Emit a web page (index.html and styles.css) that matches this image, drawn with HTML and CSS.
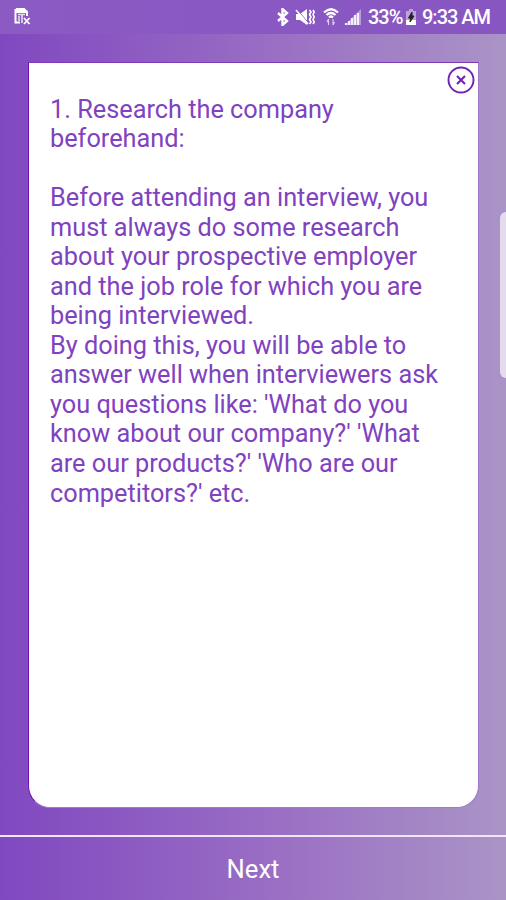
FILE: index.html
```
<!DOCTYPE html>
<html lang="en">
<head>
  <meta charset="UTF-8" />
  <meta name="viewport" content="width=device-width, initial-scale=1.0" />
  <title>Interview Tips</title>
  <link rel="stylesheet" href="styles.css">
</head>
<body>
  <header class="status-bar">
    <svg class="icon-app" width="18" height="20" viewBox="0 0 18 20">
      <path d="M2 2h8l3 3v4M1.500 2v13.500H6" fill="none" stroke="#fff" stroke-width="2"/>
      <path d="M2 2h8l3 4H2z" fill="#fff"/>
      <path d="M4 7.500h7M8 7v9M5 9v5" stroke="#fff" stroke-opacity=".8" stroke-width="1.600"/>
      <path d="M10 11l5.500 6M15.500 11L10 17" stroke="#fff" stroke-width="1.800"/>
    </svg>
    <div class="status-icons">
      <svg class="icon-bluetooth" width="14" height="18" viewBox="0 0 14 18">
        <path d="M2 5l9 8-4.500 4V1L11 5l-9 8" fill="none" stroke="#fff" stroke-width="2.400"/>
      </svg>
      <svg class="icon-mute" width="20" height="18" viewBox="0 0 20 18">
        <path d="M1 6h4l7-5v16l-7-5H1z" fill="#fff"/>
        <path d="M2.500 2l11 13" stroke="#8a58c2" stroke-width="1"/>
        <path d="M1 2l12 14" stroke="#fff" stroke-width="1.600"/>
        <path d="M14.500 2l1.500 2-1.500 2.500L16 9l-1.500 2.500L16 14l-1.500 2M18 2l1.200 2L18 6.500 19.200 9 18 11.500l1.200 2.500-1.200 2" fill="none" stroke="#fff" stroke-width="1.600"/>
      </svg>
      <svg class="icon-wifi" width="16" height="18" viewBox="0 0 16 18">
        <path d="M1 4.500Q8-2 15 4.500M3.500 7Q8 3 12.500 7M6 9.500q2-2 4 0" fill="none" stroke="#fff" stroke-width="2.200"/>
        <path d="M5.500 11v6M4 14l1.500-3M10 11v6M11.500 14L10 17" fill="none" stroke="#fff" stroke-opacity=".7" stroke-width="1.200"/>
      </svg>
      <svg class="icon-signal" width="18" height="18" viewBox="0 0 18 18">
        <path d="M1 17L17 1v16z" fill="#fff" fill-opacity=".4"/>
        <path d="M2 17v-2M5 17v-4M8 17v-7M11 17V7M14 17V5" stroke="#fff" stroke-opacity=".85" stroke-width="2.200"/>
      </svg>
      <span class="battery-level">33%</span>
      <svg class="icon-battery" width="12" height="18" viewBox="0 0 12 18">
        <path d="M4 1h4v2h3v14H1V3h3z" fill="#fff" fill-opacity=".45"/>
        <path d="M1 12h10v5H1z" fill="#fff"/>
        <path d="M7 4L3.500 10h2L5 14l4-6H7z" fill="#222" stroke="#222"/>
      </svg>
      <span class="clock">9:33 AM</span>
    </div>
  </header>

  <main class="page">
    <article class="card">
      <button class="close-btn" aria-label="Close">
        <svg width="28" height="28" viewBox="0 0 28 28">
          <circle cx="14" cy="14" r="12.500" fill="none" stroke="#6f22b4" stroke-width="1.900"/>
          <path d="M10 10l8 8M18 10l-8 8" stroke="#6f22b4" stroke-width="2.100"/>
        </svg>
      </button>
      <h1 class="tip-title">1. Research the company<br>beforehand:</h1>
      <p class="tip-text">Before attending an interview, you<br>must always do some research<br>about your prospective employer<br>and the job role for which you are<br>being interviewed.</p>
      <p class="tip-text">By doing this, you will be able to<br>answer well when interviewers ask<br>you questions like: 'What do you<br>know about our company?' 'What<br>are our products?' 'Who are our<br>competitors?' etc.</p>
    </article>
  </main>

  <div class="edge-handle"></div>
  <button class="next-btn">Next</button>
</body>
</html>
```
FILE: styles.css
```
* { box-sizing: border-box; margin: 0; padding: 0; }

body {
  display: flex;
  flex-direction: column;
  height: 900px;
  position: relative;
  overflow: hidden;
  font-family: Roboto, sans-serif;
  background: linear-gradient(90deg, #8048c0 0%, #9a6fc4 55%, #aa94c6 100%);
}

.status-bar {
  display: flex;
  justify-content: space-between;
  height: 34px;
  padding: 0 14px 0 14px;
  background: linear-gradient(90deg, #8c5ac3, #8756c1);
  color: #fff;
}

.icon-app {
  margin-top: 7px;
}

.status-icons {
  display: flex;
  align-items: center;
}

.icon-bluetooth {
  margin-right: 5px;
}

.icon-mute {
  margin-right: 8px;
}

.icon-wifi {
  margin-right: 5px;
}

.icon-signal {
  margin-right: 6px;
}

.battery-level,
.clock {
  font-size: 20px;
  font-weight: 500;
  line-height: 36px;
  letter-spacing: -1px;
  white-space: nowrap;
}

.battery-level {
  width: 37px;
}

.clock {
  width: 70px;
  margin-left: 5px;
}

.page {
  flex: 1;
  padding: 28px 27px 27px 28px;
}

.card {
  position: relative;
  height: 746px;
  padding: 31.5px 21px;
  background-color: #fff;
  border: 1px solid;
  border-color: #7c3abb #a078c8 #a078c8 #7112b0;
  border-radius: 0 0 22px 22px;
  color: #8042bf;
}

.close-btn {
  position: absolute;
  top: 3px;
  right: 3px;
  width: 28px;
  height: 28px;
  background: none;
  border: none;
  cursor: pointer;
}

.close-btn svg {
  display: block;
}

.tip-title,
.tip-text {
  font-size: 25.3px;
  font-weight: 400;
  line-height: 29.55px;
  white-space: nowrap;
}

.tip-title {
  margin-bottom: 29.5px;
}

.edge-handle {
  position: absolute;
  top: 212px;
  right: 0;
  width: 6px;
  height: 166px;
  background-color: #e4dced;
  border-radius: 6px 0 0 6px;
}

.next-btn {
  height: 65px;
  background: none;
  border: none;
  border-top: 2px solid #f0e6f8;
  color: #fff;
  font-family: inherit;
  font-size: 25.6px;
  cursor: pointer;
}
```
